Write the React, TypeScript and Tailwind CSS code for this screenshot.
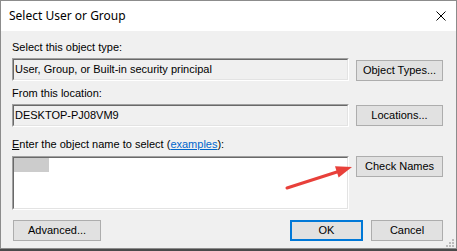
import React from 'react';

function Sunken({ className, inner, children }: { className?: string; inner?: string; children?: React.ReactNode }) {
  return (
    <div className={`border border-t-[#a0a0a0] border-l-[#a0a0a0] border-b-white border-r-white ${className ?? ''}`}>
      <div className={`h-full w-full border border-t-[#696969] border-l-[#696969] border-b-[#e3e3e3] border-r-[#e3e3e3] ${inner ?? ''}`}>
        {children}
      </div>
    </div>
  );
}

function Btn({ label, className }: { label: string; className?: string }) {
  return (
    <button
      type="button"
      className={`flex h-[21px] items-center justify-center border border-[#adadad] bg-[#e1e1e1] text-[11px] text-black ${className ?? ''}`}
    >
      {label}
    </button>
  );
}

export default function App() {
  return (
    <div className="relative h-[251px] w-[457px] overflow-hidden bg-[#4a4a4a]">
      <div className="flex h-[249px] w-[457px] flex-col border border-[#8c8c8c] bg-[#f0f0f0]">
        <div className="flex h-[30px] items-center justify-between bg-white pl-[8px] pr-[10px]">
          <span className="text-[12px] text-black [font-family:'Noto_Sans',sans-serif]">Select User or Group</span>
          <svg width="10" height="10" viewBox="0 0 10 10">
            <path d="M0.5 0.5 L9.5 9.5 M9.5 0.5 L0.5 9.5" stroke="#000" strokeWidth="1" />
          </svg>
        </div>

        <div className="relative flex flex-1 flex-col pl-[11px] pr-[13px] pt-[10px] text-[11px] leading-[13px] text-black [font-family:'Liberation_Sans',Arial,sans-serif]">
          <div className="h-[13px]">Select this object type:</div>
          <div className="mt-[4px] flex gap-[7px]">
            <Sunken className="h-[23px] w-[337px]">
              <div className="flex h-full items-center pl-[1px]">User, Group, or Built-in security principal</div>
            </Sunken>
            <Btn label="Object Types..." className="mt-[2px] w-[87px]" />
          </div>

          <div className="mt-[6px] h-[13px]">From this location:</div>
          <div className="mt-[4px] flex gap-[7px]">
            <Sunken className="h-[23px] w-[337px]">
              <div className="flex h-full items-center pl-[1px]">DESKTOP-PJ08VM9</div>
            </Sunken>
            <Btn label="Locations..." className="mt-[1px] w-[87px]" />
          </div>

          <div className="mt-[11px] h-[13px]">
            <span className="underline">E</span>nter the object name to select (
            <span className="text-[#0066cc] underline">examples</span>):
          </div>
          <div className="mt-[5px] flex gap-[7px]">
            <Sunken className="h-[54px] w-[337px]" inner="bg-white">
              <div className="h-[14px] w-[35px] bg-[#cccccc]" />
            </Sunken>
            <Btn label="Check Names" className="w-[87px]" />
          </div>

          <div className="mt-[10px] flex">
            <Btn label="Advanced..." className="ml-[1px] w-[88px]" />
            <div className="flex-1" />
            <button
              type="button"
              className="flex h-[21px] w-[73px] items-center justify-center border-2 border-[#0078d7] bg-[#e1e1e1] text-[11px] text-black"
            >
              OK
            </button>
            <Btn label="Cancel" className="ml-[8px] w-[72px]" />
          </div>

          <svg className="absolute bottom-[1px] right-[2px]" width="8" height="8" viewBox="0 0 8 8">
            <rect x="6" y="0" width="2" height="2" fill="#bcbcbc" />
            <rect x="3" y="3" width="2" height="2" fill="#bcbcbc" />
            <rect x="6" y="3" width="2" height="2" fill="#bcbcbc" />
            <rect x="0" y="6" width="2" height="2" fill="#bcbcbc" />
            <rect x="3" y="6" width="2" height="2" fill="#bcbcbc" />
            <rect x="6" y="6" width="2" height="2" fill="#bcbcbc" />
          </svg>
        </div>
      </div>

      <svg className="absolute left-0 top-0" width="457" height="251" viewBox="0 0 457 251">
        <line x1="287" y1="188" x2="340" y2="171" stroke="#e8403a" strokeWidth="3" strokeLinecap="round" />
        <polygon points="352,167 338.6,177.6 335,166.2" fill="#e8403a" />
      </svg>
    </div>
  );
}
